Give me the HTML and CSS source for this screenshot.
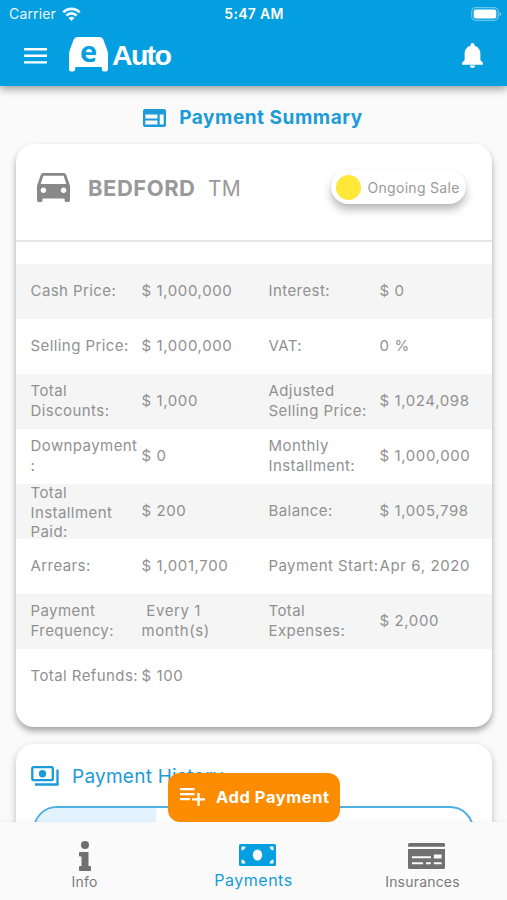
FILE: index.html
```html
<!DOCTYPE html>
<html lang="en">
<head>
<meta charset="utf-8">
<meta name="viewport" content="width=device-width, initial-scale=1">
<title>eAuto – Payment Summary</title>
<link rel="stylesheet" href="styles.css">
</head>
<body>
<div class="app">
  <header class="appbar">
    <div class="status">
      <div class="carrier"><span>Carrier</span>
        <svg width="19" height="14" viewBox="0 0 20 15" fill="none" stroke="#fff" stroke-width="2.9"><path d="M1.200 5.800a12 12 0 0 1 17.600 0M4.500 9.200a7.600 7.600 0 0 1 11 0"/><path d="M10 15l-3.200-3.200a4.500 4.500 0 0 1 6.400 0z" fill="#fff" stroke="none"/></svg>
      </div>
      <div class="time">5:47 AM</div>
      <svg class="battery" width="31" height="14" viewBox="0 0 31 14"><rect x=".7" y=".7" width="26.600" height="12.600" rx="4" fill="none" stroke="#fff" stroke-opacity=".4" stroke-width="1.200"/><rect x="2.700" y="2.500" width="22.600" height="9" rx="2" fill="#fff"/><path d="M28.600 4.700q3 2.300 0 4.600z" fill="#fff" fill-opacity=".5"/></svg>
    </div>
    <div class="toolbar">
      <svg class="menu" width="23" height="16" viewBox="0 0 23 16" fill="#fff"><path d="M0 0h23v2.400H0zM0 6.600h23V9H0zM0 13.200h23v2.400H0z"/></svg>
      <div class="logo">
        <div class="logo-car">
          <svg width="39" height="35" viewBox="0 0 39 35"><path d="M8.500 0h22q2.800 0 3.800 2.600L38 12.500q1 2.500 1 5V32q0 2.500-2 2.500h-2q-2.200 0-2.200-2.500v-2H6.200v2q0 2.500-2.200 2.500H2Q0 34.500 0 32V17.500q0-2.500 1-5L4.700 2.600Q5.700 0 8.500 0z" fill="#fff"/></svg>
          <span class="logo-e">e</span>
        </div>
        <span class="logo-text">Auto</span>
      </div>
      <svg class="bell" width="21" height="25" viewBox="4 2.500 16 19.500" preserveAspectRatio="none" fill="#fff"><path d="M12 22c1.100 0 2-.9 2-2h-4c0 1.100.89 2 2 2zm6-6v-5c0-3.070-1.640-5.640-4.500-6.320V4c0-.83-.67-1.500-1.500-1.500s-1.500.67-1.500 1.500v.68C7.630 5.360 6 7.920 6 11v5l-2 2v1.500h16v-1.500l-2-2z"/></svg>
    </div>
  </header>

  <main class="content">
    <h1 class="page-title">
      <svg width="23" height="18" viewBox="0 0 23 18"><path fill="currentColor" fill-rule="evenodd" d="M2 0h19q2 0 2 2v14q0 2-2 2H2q-2 0-2-2V2q0-2 2-2zM2.300 5.500v4h12.200v-4zM2.300 11.500v4h12.200v-4zM16.700 5.500v10h4v-10z"/></svg>
      <span>Payment Summary</span>
    </h1>

    <section class="card summary">
      <div class="vehicle">
        <svg class="car" width="33" height="29" viewBox="3 5 18 16" preserveAspectRatio="none" fill="#888"><path d="M18.920 6.010C18.720 5.420 18.160 5 17.500 5h-11c-.66 0-1.210.42-1.420 1.010L3 12v8c0 .55.45 1 1 1h1c.55 0 1-.45 1-1v-1h12v1c0 .55.45 1 1 1h1c.55 0 1-.45 1-1v-8l-2.080-5.990zM6.500 16c-.83 0-1.500-.67-1.500-1.500S5.670 13 6.500 13s1.500.67 1.500 1.500S7.330 16 6.500 16zm11 0c-.83 0-1.500-.67-1.500-1.500s.67-1.500 1.500-1.500 1.500.67 1.500 1.500-.67 1.500-1.500 1.500zM5 11l1.500-4.500h11L19 11H5z"/></svg>
        <span class="make">BEDFORD</span><span class="model">TM</span>
        <div class="chip"><i class="dot"></i><span>Ongoing Sale</span></div>
      </div>
      <div class="rows">
        <div class="row"><span>Cash Price:</span><span>$ 1,000,000</span><span>Interest:</span><span>$ 0</span></div>
        <div class="row"><span>Selling Price:</span><span>$ 1,000,000</span><span>VAT:</span><span>0 %</span></div>
        <div class="row"><span>Total<br>Discounts:</span><span>$ 1,000</span><span>Adjusted<br>Selling Price:</span><span>$ 1,024,098</span></div>
        <div class="row"><span>Downpayment<br>:</span><span>$ 0</span><span>Monthly<br>Installment:</span><span>$ 1,000,000</span></div>
        <div class="row"><span class="tall">Total<br>Installment<br>Paid:</span><span>$ 200</span><span>Balance:</span><span>$ 1,005,798</span></div>
        <div class="row"><span>Arrears:</span><span>$ 1,001,700</span><span>Payment Start:</span><span>Apr 6, 2020</span></div>
        <div class="row"><span>Payment<br>Frequency:</span><span>&nbsp;Every 1<br>month(s)</span><span>Total<br>Expenses:</span><span>$ 2,000</span></div>
        <div class="row"><span>Total Refunds:</span><span>$ 100</span></div>
      </div>
    </section>

    <section class="card history">
      <h2 class="history-title">
        <svg width="28" height="20" viewBox="0 0 28 20" fill="none" stroke="currentColor" stroke-width="2.300"><rect x="1.300" y="1.200" width="20.500" height="13" rx="1"/><circle cx="11.500" cy="7.700" r="3.700" fill="currentColor" stroke="none"/><path d="M26.500 3.500V18.500H4"/></svg>
        <span>Payment History</span>
      </h2>
      <div class="history-table"><div class="history-cell"></div></div>
    </section>
  </main>

  <button class="fab">
    <svg width="25" height="18" viewBox="0 0 25 18" fill="#fff"><path d="M0 0h14.500v2.200H0zM0 5h14.500v2.200H0zM0 10h10v2.200H0zM17.400 5h2.300v5.300H25v2.300h-5.300V18h-2.300v-5.400H12v-2.300h5.400z"/></svg>
    <span>Add Payment</span>
  </button>

  <nav class="tabs">
    <a class="tab">
      <svg width="12" height="30" viewBox="0 0 12 30" fill="#707070"><circle cx="6" cy="4" r="4"/><path d="M1 11h8.500v14H11q1 0 1 1v3q0 1-1 1H1q-1 0-1-1v-3q0-1 1-1h1.500v-9.500H1q-1 0-1-1V12q0-1 1-1z"/></svg>
      <span>Info</span>
    </a>
    <a class="tab active">
      <svg width="37" height="22" viewBox="0 0 37 22"><rect width="37" height="22" rx="1.500" fill="#049fe0"/><ellipse cx="18.500" cy="11" rx="4.700" ry="5.500" fill="#fafafa"/><path d="M2.500 2.500h4q-.5 3.500-4 4zM34.500 2.500h-4q.5 3.500 4 4zM2.500 19.500h4q-.5-3.500-4-4zM34.500 19.500h-4q.5-3.500 4-4z" fill="#fafafa"/></svg>
      <span>Payments</span>
    </a>
    <a class="tab">
      <svg width="37" height="26" viewBox="0 0 38 26" preserveAspectRatio="none"><path d="M1.500 0h35Q38 0 38 1.500V3.800H0V1.500Q0 0 1.500 0zM0 6h38v18.500q0 1.500-1.500 1.500h-35Q0 26 0 24.500z" fill="#707070"/><path d="M4 13.300h19.500v2H4zM26.500 11.500h8v4h-8zM4 19.300h11.500v2H4zM18.500 19.300h5v2h-5zM26.500 19.300h8v2h-8z" fill="#fafafa"/></svg>
      <span>Insurances</span>
    </a>
  </nav>
</div>
</body>
</html>
```
FILE: styles.css
```css
* { box-sizing: border-box; }
body { margin: 0; font-family: Inter, "Liberation Sans", sans-serif; background: #fafafa; }
svg { display: block; flex: none; }
.app { position: relative; display: flex; flex-direction: column; width: 507px; height: 900px; overflow: hidden; }

.appbar { position: relative; z-index: 2; flex: none; height: 86px; background: #049fe0; color: #fff; box-shadow: 0 3px 8px rgba(0,0,0,.38); }
.status { display: grid; grid-template-columns: 1fr auto 1fr; align-items: center; height: 27px; padding: 0 8px 0 9px; font-size: 14px; }
.carrier { display: flex; align-items: center; gap: 6px; opacity: .92; letter-spacing: .15px; }
.time { font-weight: 600; font-size: 14px; letter-spacing: .3px; }
.battery { justify-self: end; margin-right: -3px; }
.toolbar { display: flex; align-items: center; height: 59px; padding: 0 24px; }
.menu { margin-top: -1px; }
.logo { display: flex; align-items: center; margin-left: 22px; margin-top: -4px; }
.logo-car { position: relative; width: 39px; height: 35px; }
.logo-e { position: absolute; left: 0; top: -4px; width: 39px; text-align: center; color: #049fe0; font: 700 29px/35px "Open Sans", sans-serif; }
.logo-text { margin: 2px 0 0 4px; font: 700 28.500px/35px "Liberation Sans", sans-serif; letter-spacing: -1.700px; }
.bell { margin: -2px 0 0 auto; }

.content { flex: none; height: 736px; padding: 0 15px 0 16px; overflow: hidden; }
.page-title { display: flex; align-items: center; justify-content: center; gap: 13px; height: 58px; margin: 0; padding: 5px 2px 0 0; color: #1b9bd7; font-size: 19px; font-weight: 700; letter-spacing: .53px; }
.card { background: #fff; border-radius: 18px; box-shadow: 0 3px 7px rgba(0,0,0,.25); overflow: hidden; }
.summary { height: 583px; box-shadow: 0 4px 6px rgba(0,0,0,.34); }
.vehicle { display: flex; align-items: center; height: 98px; padding: 0 26px 10px 21px; border-bottom: 2px solid #e8e8e8; color: #999; font-size: 22px; }
.make { margin: 2px 0 0 18px; font-weight: 700; letter-spacing: .5px; }
.model { margin: 2px 0 0 12.500px; font-size: 21px; letter-spacing: .3px; }
.chip { display: flex; align-items: center; gap: 7px; width: 135px; height: 34px; margin-left: auto; padding-left: 4.500px; border-radius: 17px; background: #fff; box-shadow: 0 6px 9px rgba(0,0,0,.26), 0 1px 3px rgba(0,0,0,.06); font-size: 14px; letter-spacing: .3px; white-space: nowrap; }
.dot { flex: none; width: 25px; height: 25px; border-radius: 50%; background: #ffe838; }
.rows { padding-top: 22px; }
.row { display: grid; grid-template-columns: 111px 127px 111px 1fr; grid-template-rows: 53px; align-items: center; height: 55px; padding: 0 0 2px 14.500px; color: #919191; font-size: 15px; line-height: 19.500px; letter-spacing: .42px; white-space: nowrap; }
.row span:nth-child(even) { letter-spacing: .6px; }
.row .tall { padding-top: 4px; }
.row:nth-child(odd) { background: #f5f5f5; }

.history { height: 160px; margin-top: 17px; padding: 22px 18px 0 17px; }
.history-title { display: flex; align-items: center; gap: 13px; height: 20px; margin: 0 0 0 -2px; color: #1b9bd7; font-size: 19px; font-weight: 400; letter-spacing: .25px; }
.history-table { height: 80px; margin-top: 20px; border: 2px solid #4bb2e1; border-radius: 24px; overflow: hidden; }
.history-cell { width: 121px; height: 100%; background: #e3f2fd; }

.fab { position: absolute; z-index: 3; left: 168px; top: 773px; display: flex; align-items: center; gap: 11px; width: 172px; height: 49px; padding: 0 0 2px 12px; border: 0; border-radius: 12px; background: #fd8c00; color: #fff; font: 700 16.500px Inter, sans-serif; letter-spacing: .55px; white-space: nowrap; }

.tabs { position: relative; z-index: 2; flex: none; display: grid; grid-template-columns: repeat(3, 1fr); height: 78px; background: #fafafa; box-shadow: 0 -1px 3px rgba(0,0,0,.04); }
.tab { display: flex; flex-direction: column; align-items: center; justify-content: flex-end; padding-bottom: 9px; gap: 1px; color: #7b7b7b; font-size: 14px; line-height: 19px; letter-spacing: .2px; }
.tab svg { position: relative; left: .5px; }
.tab:last-child svg { left: 4px; margin-bottom: 2px; }
.tab.active { color: #159cda; font-size: 16px; line-height: 20px; gap: 4px; padding-bottom: 10px; letter-spacing: .5px; }
.tab.active svg { left: 4px; }
```
